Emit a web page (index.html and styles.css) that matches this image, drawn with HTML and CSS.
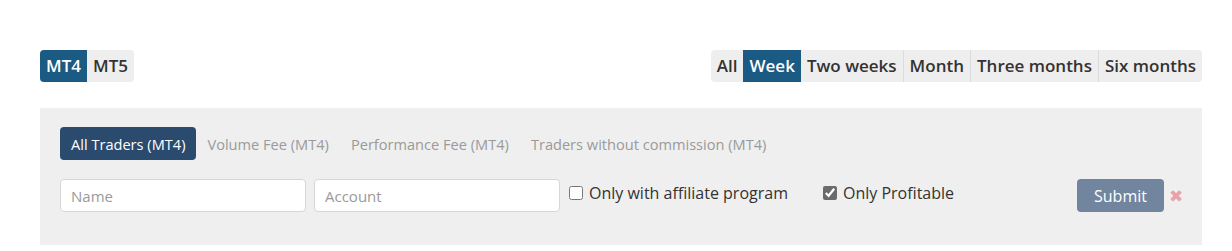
FILE: index.html
```html
<!DOCTYPE html>
<html>
<head>
<meta charset="utf-8">
<link rel="stylesheet" href="styles.css">
</head>
<body>
<div class="page">
  <div class="topbar">
    <div class="seg">
      <span class="seg-item active">MT4</span>
      <span class="seg-item">MT5</span>
    </div>
    <div class="seg periods">
      <span class="seg-item">All</span>
      <span class="seg-item active">Week</span>
      <span class="seg-item">Two weeks</span>
      <span class="seg-item sep">Month</span>
      <span class="seg-item sep">Three months</span>
      <span class="seg-item sep">Six months</span>
    </div>
  </div>
  <div class="panel">
    <div class="tabs">
      <span class="tab active">All Traders (MT4)</span>
      <span class="tab">Volume Fee (MT4)</span>
      <span class="tab">Performance Fee (MT4)</span>
      <span class="tab">Traders without commission (MT4)</span>
    </div>
    <form class="filters">
      <input class="field" type="text" placeholder="Name">
      <input class="field" type="text" placeholder="Account">
      <label class="check check-aff"><input type="checkbox"> Only with affiliate program</label>
      <label class="check check-prof"><input type="checkbox" checked> Only Profitable</label>
      <span class="spacer"></span>
      <button class="submit" type="button">Submit</button>
      <span class="clear">&#x2716;</span>
    </form>
  </div>
</div>
</body>
</html>
```

FILE: styles.css
```css
* { box-sizing: border-box; }
html, body { margin: 0; padding: 0; background: #fff; }
body { font-family: "Open Sans", "DejaVu Sans", sans-serif; color: #333; }
.page { padding: 50px 30px 0 40px; }
.topbar { display: flex; justify-content: space-between; align-items: flex-start; }
.seg { display: flex; background: #eeeeee; border-radius: 4px; overflow: hidden; height: 32px; }
.seg-item { display: flex; align-items: center; padding: 0 6px 1px; font-size: 17px; font-weight: 600; color: #333; }
.seg-item.active { background: #1b5a82; color: #fff; }
.seg-item.sep { border-left: 1px solid #dcdcdc; }
.panel { margin-top: 26px; background: #efefef; height: 137px; padding: 19px 20px 0 20px; }
.tabs { display: flex; align-items: center; gap: 11px; height: 33px; }
.tab { font-size: 14.6px; color: #9a9a9a; padding: 0 11px 0 0; }
.tab.active { background: #2a4a6e; color: #fff; border-radius: 4px; padding: 0 11px; height: 33px; display: flex; align-items: center; }
.filters { display: flex; align-items: center; margin-top: 19px; height: 33px; }
.field { width: 246px; height: 33px; border: 1px solid #d6d6d6; border-radius: 4px; background: #fff; padding: 0 10px; font-family: inherit; font-size: 15px; margin-right: 8px; }
.field::placeholder { color: #9a9a9a; }
.check { display: flex; align-items: center; font-size: 16px; color: #333; margin-top: -5px; }
.check input { margin: 0 6px 0 1px; width: 14px; height: 14px; accent-color: #6b6b6b; }
.check-prof { margin-left: 34px; }
.spacer { flex: 1; }
.submit { width: 87px; height: 33px; background: #72859f; color: #fff; border: none; border-radius: 4px; font-family: inherit; font-size: 16px; }
.clear { color: #e8a3aa; font-size: 17px; margin-left: 5px; width: 13px; }
```
